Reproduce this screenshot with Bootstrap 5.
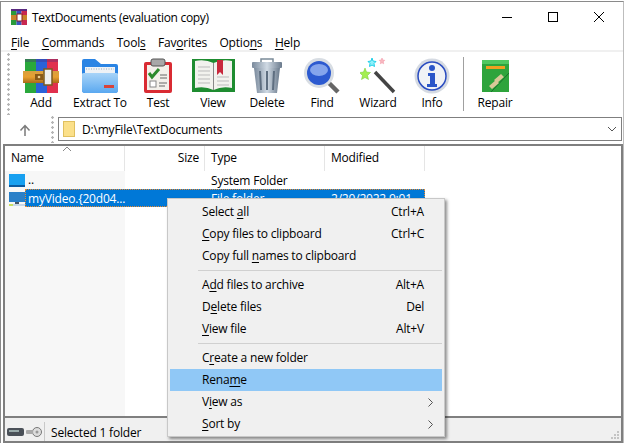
<!doctype html>
<html lang="en"><head><meta charset="utf-8">
<link href="https://cdn.jsdelivr.net/npm/bootstrap@5.3.0/dist/css/bootstrap.min.css" rel="stylesheet">
<style>
html,body{height:443px;width:625px;overflow:hidden;background:#fff}
body{font:12px/16px "Open Sans","Noto Sans",sans-serif;letter-spacing:-.2px;color:#000;padding:1px 1px 0 0}
.winx{height:442px;border:1px solid #8a8a8a;border-right-color:#bdbdbd;border-bottom:0;position:relative;background:#fff}
.ttl{height:30px;padding:0 1px 0 10px;flex:none}
.ttx{letter-spacing:-.3px;padding-top:2px}
.logo{width:16px;height:16px;margin-right:5px}
.wbtn{width:46px;height:30px}
.menux{height:18px;padding:4px 0 0 10px;gap:12.5px;flex:none}
.menux u,.mi u{text-underline-offset:2px}
.tbar{height:65px;border-top:2px solid #f0f0f0;padding-left:6px;flex:none}
.grip{width:3px;flex:none;background-image:radial-gradient(#b5b5b5 1px,transparent 1.2px);background-size:3px 5px}
.tool{padding-top:6px;text-align:center;flex:none}
.tool svg{width:36px;height:36px;display:block;margin:0 auto 1px}
.t1{width:58px;margin-left:2px}.t2{width:60px}.t3{width:56px}.t4{width:54px}.t5{width:54px}.t6{width:56px}.t7{width:56px}.t8{width:52px}.t9{width:62px}
.tool svg.ibook{width:43px}
.tool svg.irep{width:27px;height:32px;margin:2px auto 3px}
.vsep{width:1px;height:54px;background:#a0a0a0;margin:5px 0 0 5px}
.addr{height:28px;align-items:center;flex:none}
.upb{width:48px;text-align:center}
.addr .grip{margin-left:2px}
.abox{height:24px;flex:1;border:1px solid #7f7f7f;padding-left:4px;margin:0 1px 0 4px}
.atx{padding-top:2px}
.afold{margin-right:7px}
.achev{margin-right:4px}
.lst{height:274px;border:2px solid #7f7f7f;margin:1px 0 0 2px;position:relative;flex:none}
.hdr{height:25px}
.hc{height:25px;padding:4px 5px 0 6px;border-right:1px solid #e5e5e5;flex:none}
.c1{width:120px}.c2{width:80px;text-align:right}.c3{width:120px}.c4{width:100px}
.caret{position:absolute;left:57px;top:0}
.rw{height:18px;position:relative;line-height:20px}
.bodyl{height:245px;background:linear-gradient(90deg,#f7f7f7 120px,#fff 120px)}
.cn{width:200px;padding-left:4px;flex:none;gap:3px}
.selbar{background:#0078d7;color:#fff;outline:1px dotted #e98a2f;outline-offset:-1px;height:18px;width:400px;margin-left:20px;padding-left:3px}
.sn{width:183px}.st{width:120px}
.cellty{width:120px;padding-left:6px}
.mon{position:absolute;left:4px;top:3px}
.sts{height:25px;padding:4px 0 0 2px;background:#f0f0f0;margin-left:2px;gap:2px;position:relative;border:2px solid #7f7f7f;border-width:0 2px 2px 2px;flex:none}
.stsep{width:1px;height:19px;background:#c8c8c8;margin-right:4px}
.stx{padding-top:2px}
.sgrip{position:absolute;right:1px;bottom:1px}
.ctx{position:absolute;left:166px;top:196px;width:278px;height:239px;background:#f0f0f0;border:1px solid #c8c8c8;box-shadow:2px 2px 3px rgba(0,0,0,.45);padding:2px;z-index:5}
.mi{height:22px;line-height:22px;padding:0 18px 0 32px;color:#000}
.mi.subm{padding-right:9px}
.mi.hot{background:#90c8f6}
.msep{height:1px;background:#d0d0d0;margin:3px 0 3px 28px}
</style></head><body>
<div class="winx d-flex flex-column">
 <div class="ttl d-flex align-items-center">
  <svg class="logo" viewBox="0 0 16 16"><rect y="0" width="5.500" height="16" fill="#2a9a3a"/><rect x="5.500" width="5" height="16" fill="#3a55c0"/><rect x="10.500" width="5.500" height="16" fill="#c82850"/><rect y="0" width="16" height="2" fill="#5a2a80"/><rect y="6" width="16" height="5" fill="#c8842a"/><rect x="6" y="5" width="5" height="7" fill="#fff" stroke="#8a2020"/></svg>
  <span class="flex-grow-1 ttx">TextDocuments (evaluation copy)</span>
  <div class="wbtn d-flex align-items-center justify-content-center"><svg width="12" height="12"><path d="M1 6.500h10" stroke="#000"/></svg></div>
  <div class="wbtn d-flex align-items-center justify-content-center"><svg width="12" height="12"><rect x="1.500" y="1.500" width="9" height="9" fill="none" stroke="#000"/></svg></div>
  <div class="wbtn d-flex align-items-center justify-content-center"><svg width="12" height="12"><path d="M1 1l10 10M11 1L1 11" stroke="#000"/></svg></div>
 </div>
 <div class="menux d-flex align-items-center"><span><u>F</u>ile</span><span><u>C</u>ommands</span><span>Tool<u>s</u></span><span>Fav<u>o</u>rites</span><span>Optio<u>n</u>s</span><span><u>H</u>elp</span></div>
 <div class="tbar d-flex">
  <div class="grip"></div>
  <div class="tool t1"><svg viewBox="0 0 36 36"><defs><linearGradient id="gb" x1="0" y1="0" x2="0" y2="1"><stop offset="0" stop-color="#d8a040"/><stop offset=".5" stop-color="#e8a030"/><stop offset="1" stop-color="#a86a18"/></linearGradient></defs><rect x="2" y="1" width="11" height="34" fill="#2aa83c"/><rect x="13" y="1" width="11" height="34" fill="#2a62d8"/><rect x="24" y="1" width="11" height="34" fill="#e0304e"/><rect x="2" y="1" width="33" height="3" fill="#4a2a80" opacity=".35"/><rect x="0" y="13" width="36" height="12" fill="url(#gb)"/><rect x="21" y="11" width="8" height="16" fill="#eee" stroke="#7a5a20" stroke-width="1.500"/><rect x="12" y="16" width="8" height="6" fill="#8a5a18"/><circle cx="16" cy="19" r="1.300" fill="#f0d090"/></svg>Add</div>
  <div class="tool t2"><svg viewBox="0 0 36 36"><defs><linearGradient id="gf" x1="0" y1="0" x2="0" y2="1"><stop offset="0" stop-color="#a8d4f8"/><stop offset="1" stop-color="#5aa8f0"/></linearGradient></defs><path d="M0 3q0-2 2-2h11l6 5h15q2 0 2 2v24q0 3-3 3H3q-3 0-3-3z" fill="#2a84e4"/><rect x="3" y="9" width="30" height="7" fill="#eef2f6"/><path d="M4 11h28" stroke="#9ab" stroke-dasharray="1 1.500"/><path d="M0 16q0-1 2-1h32q2 0 2 1v16q0 3-3 3H3q-3 0-3-3z" fill="url(#gf)"/><rect x="22" y="27" width="10" height="3" fill="#d8433a"/></svg>Extract To</div>
  <div class="tool t3"><svg viewBox="0 0 36 36"><rect x="4" y="4" width="28" height="31" rx="2" fill="#d92b33"/><rect x="7" y="7" width="22" height="25" fill="#f3f0ea"/><rect x="11" y="1" width="14" height="7" rx="2" fill="#a8a8a8" stroke="#555"/><path d="M9 15l3 4 7-8" fill="none" stroke="#2c8a2c" stroke-width="3"/><rect x="10" y="23" width="6" height="6" fill="#fff" stroke="#888"/><path d="M20 17h7M20 20h7M19 25h8M19 28h6" stroke="#666"/></svg>Test</div>
  <div class="tool t4"><svg class="ibook" viewBox="0 0 43 36"><rect y="1" width="43" height="33" fill="#1e8c30"/><path d="M3 3q10-2 18.500 2q8.500-4 18.500-2v27q-10-2-18.500 2q-8.500-4-18.500-2z" fill="#f2f2ee"/><path d="M21.500 5v27" stroke="#888"/><path d="M6 9h12M6 13h12M6 17h12M6 21h12M6 25h12M25 19h12M25 23h12M25 27h12" stroke="#bbb"/><path d="M25 2h6v15l-3-3-3 3z" fill="#c8283c"/></svg>View</div>
  <div class="tool t5"><svg viewBox="0 0 36 36"><defs><linearGradient id="gt" x1="0" x2="1" y1="0" y2="0"><stop offset="0" stop-color="#7a8a9c"/><stop offset=".5" stop-color="#d0dae4"/><stop offset="1" stop-color="#6a7a8c"/></linearGradient></defs><path d="M12 4V1h12v3" fill="none" stroke="#7a8a98" stroke-width="1.500"/><rect x="3" y="4" width="30" height="6" rx="1" fill="url(#gt)"/><path d="M5 10h26l-3 25H8z" fill="url(#gt)"/><path d="M11 13l1 19M18 13v19M25 13l-1 19" stroke="#5e6e80" stroke-width="2"/></svg>Delete</div>
  <div class="tool t6"><svg viewBox="0 0 36 36"><path d="M25 25l9 9" stroke="#666" stroke-width="4.500"/><circle cx="15" cy="15" r="15" fill="#d8dde3"/><circle cx="15" cy="15" r="12" fill="#2c5ad0"/><ellipse cx="15" cy="12" rx="9" ry="6" fill="#85a5ec"/></svg>Find</div>
  <div class="tool t7"><svg viewBox="0 0 36 36"><path d="M15 14l19 20" stroke="#444" stroke-width="3.500"/><path d="M5 10l1.500 4 4 .5-3 3 1 4-3.500-2-3.500 2 1-4-3-3 4-.5z" fill="#a4ee50" stroke="#70c830" stroke-width=".5"/><path d="M12 0l1 3 3 .5-2 2 .5 3-2.500-1.500-2.500 1.500.5-3-2-2 3-.5z" fill="#8ef0fa" stroke="#20d0e8"/><path d="M22 0l.8 2 2 .3-1.500 1.500.4 2-1.700-1-1.700 1 .4-2-1.500-1.500 2-.3z" fill="#f8b8c0" stroke="#f090a0" stroke-width=".5"/></svg>Wizard</div>
  <div class="tool t8"><svg viewBox="0 0 36 36"><circle cx="18" cy="18" r="17.500" fill="#d5dae2"/><circle cx="18" cy="18" r="14" fill="#f0f2f6" stroke="#2a4cc0" stroke-width="1.500"/><circle cx="18" cy="10" r="3" fill="#2a55c8"/><path d="M14 15h7v11h2v3H13v-3h3v-8h-2z" fill="#2a55c8"/></svg>Info</div>
  <div class="vsep"></div>
  <div class="tool t9"><svg class="irep" viewBox="0 0 27 32"><rect width="27" height="32" fill="#2ea43c"/><rect y="0" width="27" height="4" fill="#50c860"/><rect x="4" y="6" width="19" height="3" fill="#f0a020"/><path d="M9 32L27 13" stroke="#15702a"/><path d="M12 20l7-6 3 3-7 6zM10 29l-3-3 7-6 3 3z" fill="#d8c898"/></svg>Repair</div>
 </div>
 <div class="addr d-flex">
  <div class="upb"><svg width="12" height="12" viewBox="0 0 12 12"><path d="M6 12V2M1.500 6.500L6 1.500l4.500 5" fill="none" stroke="#7a7a7a" stroke-width="1.500"/></svg></div>
  <div class="grip align-self-stretch"></div>
  <div class="abox d-flex align-items-center">
   <svg class="afold" width="12" height="16" viewBox="0 0 12 16"><rect x=".5" y=".5" width="11" height="15" fill="#fbe08a" stroke="#e0c060"/></svg>
   <span class="flex-grow-1 atx">D:\myFile\TextDocuments</span>
   <svg class="achev" width="10" height="6"><path d="M1 1l4 4 4-4" fill="none" stroke="#555"/></svg>
  </div>
 </div>
 <div class="lst">
  <div class="hdr d-flex">
   <div class="hc c1">Name</div><div class="hc c2">Size</div><div class="hc c3">Type</div><div class="hc c4">Modified</div>
  </div>
  <svg class="caret" width="10" height="6"><path d="M1 5l4-4 4 4" fill="none" stroke="#888"/></svg>
  <div class="bodyl">
   <div class="rw d-flex">
    <div class="cn d-flex align-items-center"><svg width="16" height="13" viewBox="0 0 16 13"><rect width="16" height="12" fill="#18a0f0"/><rect y="11" width="16" height="2" fill="#0a5aa0"/></svg><span>..</span></div>
    <div class="cellty">System Folder</div>
   </div>
   <div class="rw d-flex">
    <svg class="mon" width="16" height="14" viewBox="0 0 16 14"><rect width="16" height="10" fill="#2a80c8"/><rect x="6" y="10" width="4" height="2" fill="#456"/><rect y="12" width="16" height="2" fill="#c8d8e8"/><rect y="12" width="4" height="2" fill="#c8e060"/></svg>
    <div class="selbar d-flex"><span class="sn">myVideo.{20d04...</span><span class="st">File folder</span><span>2/20/2022 9:01</span></div>
   </div>
  </div>
 </div>
 <div class="sts d-flex align-items-center">
  <svg width="17" height="8"><rect width="17" height="8" rx="2" fill="#4a5058"/><rect x="2" y="2" width="10" height="2" fill="#9aa"/></svg>
  <svg width="16" height="10"><circle cx="11" cy="5" r="4.500" fill="#ddd" stroke="#777"/><circle cx="11" cy="5" r="1.500" fill="#999"/><rect y="3" width="7" height="4" rx="1" fill="#aaa"/></svg>
  <div class="stsep"></div><span class="stx">Selected 1 folder</span>
  <svg class="sgrip" width="10" height="10" fill="#c4c4c4"><path d="M7 1h2v2H7zM4 4h2v2H4zM7 4h2v2H7zM1 7h2v2H1zM4 7h2v2H4zM7 7h2v2H7z"/></svg>
 </div>
 <div class="ctx">
  <div class="mi d-flex justify-content-between"><span>Select <u>a</u>ll</span><span>Ctrl+A</span></div>
  <div class="mi d-flex justify-content-between"><span><u>C</u>opy files to clipboard</span><span>Ctrl+C</span></div>
  <div class="mi d-flex justify-content-between"><span>Copy full <u>n</u>ames to clipboard</span></div>
  <div class="msep"></div>
  <div class="mi d-flex justify-content-between"><span>A<u>d</u>d files to archive</span><span>Alt+A</span></div>
  <div class="mi d-flex justify-content-between"><span>D<u>e</u>lete files</span><span>Del</span></div>
  <div class="mi d-flex justify-content-between"><span><u>V</u>iew file</span><span>Alt+V</span></div>
  <div class="msep"></div>
  <div class="mi d-flex justify-content-between"><span>C<u>r</u>eate a new folder</span></div>
  <div class="mi hot d-flex justify-content-between"><span>Rena<u>m</u>e</span></div>
  <div class="mi subm d-flex justify-content-between align-items-center"><span>V<u>i</u>ew as</span><svg width="5" height="9"><path d="M.5 .5l4 4-4 4" fill="none" stroke="#555"/></svg></div>
  <div class="mi subm d-flex justify-content-between align-items-center"><span><u>S</u>ort by</span><svg width="5" height="9"><path d="M.5 .5l4 4-4 4" fill="none" stroke="#555"/></svg></div>
 </div>
</div>
</body></html>
